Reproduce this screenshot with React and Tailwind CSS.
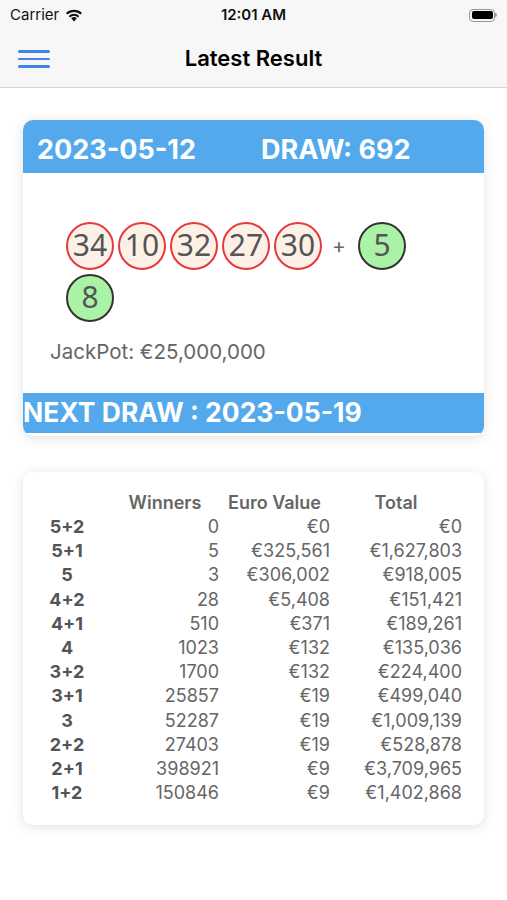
const rows = [
  ['5+2', '0', '€0', '€0'],
  ['5+1', '5', '€325,561', '€1,627,803'],
  ['5', '3', '€306,002', '€918,005'],
  ['4+2', '28', '€5,408', '€151,421'],
  ['4+1', '510', '€371', '€189,261'],
  ['4', '1023', '€132', '€135,036'],
  ['3+2', '1700', '€132', '€224,400'],
  ['3+1', '25857', '€19', '€499,040'],
  ['3', '52287', '€19', '€1,009,139'],
  ['2+2', '27403', '€19', '€528,878'],
  ['2+1', '398921', '€9', '€3,709,965'],
  ['1+2', '150846', '€9', '€1,402,868'],
];

function Ball({ n, star }) {
  return (
    <div
      className={`w-[48px] h-[48px] rounded-full flex items-center justify-center text-[30px] text-[#555] border-2 ${
        star ? 'bg-[#a9f2a6] border-[#333]' : 'bg-[#fdf0e6] border-[#e53b3b]'
      }`}
      style={{ fontFamily: '"Noto Sans", "DejaVu Sans", sans-serif' }}
    >
      <span className="leading-none -mt-[2px]">{n}</span>
    </div>
  );
}

export default function App() {
  return (
    <div className="w-[507px] h-[900px] bg-white" style={{ fontFamily: 'Inter, "Liberation Sans", sans-serif' }}>
      {/* Status + nav */}
      <div className="bg-[#f7f7f7] border-b border-[#d6d6d6]">
        <div className="h-[30px] flex items-center justify-between px-[10px] text-[15px] text-[#111]">
          <div className="flex items-center gap-[6px] w-[120px]">
            <span>Carrier</span>
            <svg width="18" height="13" viewBox="0 0 18 13">
              <path d="M9 12.5 L6.2 9.3 A4 4 0 0 1 11.8 9.3 Z" fill="#111" />
              <path d="M3.7 6.9 A7.6 7.6 0 0 1 14.3 6.9 L12.9 8.4 A5.6 5.6 0 0 0 5.1 8.4 Z" fill="#111" />
              <path d="M1 4.1 A11.5 11.5 0 0 1 17 4.1 L15.6 5.6 A9.5 9.5 0 0 0 2.4 5.6 Z" fill="#111" />
            </svg>
          </div>
          <span className="font-semibold">12:01 AM</span>
          <div className="w-[120px] flex justify-end">
            <div className="flex items-center">
              <div className="w-[26px] h-[13px] rounded-[4px] border border-[#999] p-[1.5px]">
                <div className="w-full h-full rounded-[2px] bg-black" />
              </div>
              <div className="w-[2px] h-[4px] bg-[#999] rounded-r-sm" />
            </div>
          </div>
        </div>
        <div className="h-[57px] relative flex items-center justify-center">
          <div className="absolute left-[18px] top-[20px] flex flex-col gap-[5px]">
            <div className="w-[32px] h-[2.5px] bg-[#3f86e8] rounded-full" />
            <div className="w-[32px] h-[2.5px] bg-[#3f86e8] rounded-full" />
            <div className="w-[32px] h-[2.5px] bg-[#3f86e8] rounded-full" />
          </div>
          <span className="text-[22px] font-semibold text-black">Latest Result</span>
        </div>
      </div>

      {/* Result card */}
      <div className="mx-[23px] mt-[32px] rounded-[10px] bg-white shadow-[0_2px_12px_rgba(0,0,0,0.12)] overflow-hidden">
        <div className="h-[53px] bg-[#53a9eb] flex items-center text-white font-bold text-[27px] pl-[14px] pt-[8px]">
          <span className="w-[224px]">2023-05-12</span>
          <span>DRAW: 692</span>
        </div>
        <div className="pt-[49px] pl-[43px] flex flex-col gap-[4px]">
          <div className="flex items-center gap-[4px]">
            <Ball n="34" />
            <Ball n="10" />
            <Ball n="32" />
            <Ball n="27" />
            <Ball n="30" />
            <span className="w-[30px] text-center text-[21px] text-[#666] -ml-[2px]">+</span>
            <Ball n="5" star />
          </div>
          <div className="flex">
            <Ball n="8" star />
          </div>
        </div>
        <div className="pl-[27px] mt-[15px] text-[20.5px] text-[#666]">JackPot: €25,000,000</div>
        <div className="mt-[25px] mb-[3px] h-[40px] bg-[#53a9eb] flex items-center text-white font-bold text-[26.5px]">
          NEXT DRAW : 2023-05-19
        </div>
      </div>

      {/* Prize table card */}
      <div className="mx-[23px] mt-[36px] rounded-[10px] bg-white shadow-[0_2px_12px_rgba(0,0,0,0.12)] pt-[19px] pb-[20px]">
        <div className="grid grid-cols-[88px_108px_111px_132px] text-[18px] leading-[24.2px] text-[#666]">
          <span />
          <span className="text-center font-semibold">Winners</span>
          <span className="text-center font-semibold">Euro Value</span>
          <span className="text-center font-semibold">Total</span>
          {rows.map(([a, b, c, d]) => (
            <div key={a} className="contents">
              <span className="text-center font-bold text-[#555]">{a}</span>
              <span className="text-right">{b}</span>
              <span className="text-right">{c}</span>
              <span className="text-right">{d}</span>
            </div>
          ))}
        </div>
      </div>
    </div>
  );
}
